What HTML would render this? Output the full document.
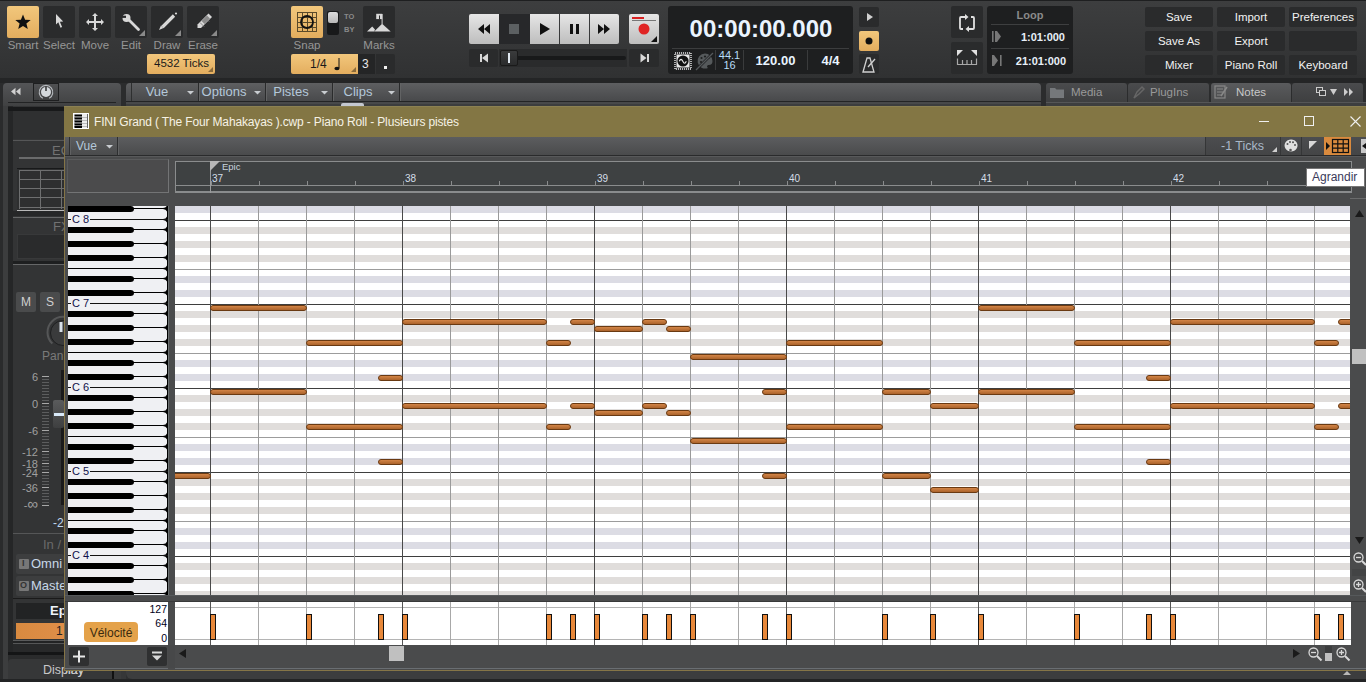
<!DOCTYPE html><html><head><meta charset="utf-8"><style>
html,body{margin:0;padding:0;}
body{width:1366px;height:682px;overflow:hidden;position:relative;background:#2b2c2d;font-family:"Liberation Sans",sans-serif;}
div{box-sizing:border-box;}
svg{position:absolute;overflow:visible;}
</style></head><body>
<div style="position:absolute;left:0px;top:0px;width:1366px;height:79px;background:linear-gradient(#3d3e3f,#303132);"></div>
<div style="position:absolute;left:0px;top:0px;width:1366px;height:1px;background:#1e1f20;"></div>
<div style="position:absolute;left:0px;top:78px;width:1366px;height:5px;background:#242526;"></div>
<div style="position:absolute;left:7px;top:6px;width:32px;height:32px;background:linear-gradient(#f2c77c,#e3ad5e);border-radius:2px;"></div>
<div style="position:absolute;left:1px;top:39px;width:44px;text-align:center;white-space:nowrap;font-size:11.5px;color:#969696;">Smart</div>
<div style="position:absolute;left:43px;top:6px;width:32px;height:32px;background:#2a2b2c;border-radius:2px;"></div>
<div style="position:absolute;left:37px;top:39px;width:44px;text-align:center;white-space:nowrap;font-size:11.5px;color:#969696;">Select</div>
<div style="position:absolute;left:79px;top:6px;width:32px;height:32px;background:#2a2b2c;border-radius:2px;"></div>
<div style="position:absolute;left:73px;top:39px;width:44px;text-align:center;white-space:nowrap;font-size:11.5px;color:#969696;">Move</div>
<div style="position:absolute;left:115px;top:6px;width:32px;height:32px;background:#2a2b2c;border-radius:2px;"></div>
<div style="position:absolute;left:109px;top:39px;width:44px;text-align:center;white-space:nowrap;font-size:11.5px;color:#969696;">Edit</div>
<svg style="left:139px;top:30px" width="6" height="6"><path d="M6 0V6H0Z" fill="#8a8a8a"/></svg>
<div style="position:absolute;left:151px;top:6px;width:32px;height:32px;background:#2a2b2c;border-radius:2px;"></div>
<div style="position:absolute;left:145px;top:39px;width:44px;text-align:center;white-space:nowrap;font-size:11.5px;color:#969696;">Draw</div>
<svg style="left:175px;top:30px" width="6" height="6"><path d="M6 0V6H0Z" fill="#8a8a8a"/></svg>
<div style="position:absolute;left:187px;top:6px;width:32px;height:32px;background:#2a2b2c;border-radius:2px;"></div>
<div style="position:absolute;left:181px;top:39px;width:44px;text-align:center;white-space:nowrap;font-size:11.5px;color:#969696;">Erase</div>
<svg style="left:211px;top:30px" width="6" height="6"><path d="M6 0V6H0Z" fill="#8a8a8a"/></svg>
<svg style="left:7px;top:6px" width="32" height="32"><path d="M16 8.5l2.1 5.2 5.6.3-4.3 3.6 1.4 5.4L16 20l-4.8 3 1.4-5.4-4.3-3.6 5.6-.3z" fill="#111"/></svg>
<svg style="left:43px;top:6px" width="32" height="32"><path d="M13 8v10.5l2.3-2.2 2.2 5.5 1.6-.7-2.2-5.4 3.3-.2z" fill="#d8d8d8"/></svg>
<svg style="left:79px;top:6px" width="32" height="32"><path d="M16 7l3 3h-2v5h5v-2l3 3-3 3v-2h-5v5h2l-3 3-3-3h2v-5h-5v2l-3-3 3-3v2h5v-5h-2z" fill="#d8d8d8"/></svg>
<svg style="left:115px;top:6px" width="32" height="32"><path d="M13 13L23.5 23.5" stroke="#d8d8d8" stroke-width="2.8" stroke-linecap="round"/><circle cx="11.5" cy="12" r="4" fill="#d8d8d8"/><path d="M5.5 10.8H11" stroke="#2a2b2c" stroke-width="2.2"/></svg>
<svg style="left:151px;top:6px" width="32" height="32"><path d="M23 9.5L11.5 21" stroke="#d8d8d8" stroke-width="3.2"/><path d="M10 19.5l2.5 2.5-4.5 2z" fill="#d8d8d8"/><circle cx="25" cy="7.5" r="1.1" fill="#d8d8d8"/></svg>
<svg style="left:187px;top:6px" width="32" height="32"><path d="M21.5 7.5l3.5 3.5-11 11h-3.5v-3.5z" fill="#d8d8d8"/><path d="M13 16.5l4 4M18 11.5l4 4" stroke="#888" stroke-width="1"/><path d="M14.5 15l5.5-5.5 3 3-5.5 5.5z" fill="#8a8a8a"/></svg>
<div style="position:absolute;left:147px;top:54px;width:68px;height:20px;background:linear-gradient(#f2c77c,#e3ad5e);border-radius:2px;"></div>
<div style="position:absolute;left:154px;top:57px;white-space:nowrap;font-size:11.5px;color:#1a1a1a;">4532 Ticks</div>
<svg style="left:208px;top:67px" width="5" height="5"><path d="M5 0V5H0Z" fill="#8a6a3a"/></svg>
<div style="position:absolute;left:291px;top:6px;width:32px;height:32px;background:linear-gradient(#f2c77c,#e3ad5e);border-radius:2px;"></div>
<svg style="left:291px;top:6px" width="32" height="32"><g stroke="#5a4a2a" stroke-width="1" fill="none"><rect x="6.5" y="6.5" width="19" height="19"/><path d="M11.5 6.5v19M16.5 6.5v19M21.5 6.5v19M6.5 11.5h19M6.5 16.5h19M6.5 21.5h19"/></g><circle cx="16" cy="16" r="6" stroke="#111" stroke-width="1.8" fill="none"/></svg>
<div style="position:absolute;left:327px;top:11px;width:12px;height:24px;background:#18191a;border-radius:2px;"></div>
<div style="position:absolute;left:328px;top:12px;width:10px;height:11px;background:linear-gradient(#dcdcdc,#b8b8b8);border-radius:2px;"></div>
<div style="position:absolute;left:344px;top:12px;white-space:nowrap;font-size:7.5px;font-weight:bold;color:#8a8a8a;">TO</div>
<div style="position:absolute;left:344px;top:25px;white-space:nowrap;font-size:7.5px;font-weight:bold;color:#8a8a8a;">BY</div>
<div style="position:absolute;left:363px;top:6px;width:32px;height:32px;background:#2a2b2c;border-radius:2px;"></div>
<svg style="left:363px;top:6px" width="32" height="32"><path d="M4 25.6L9.2 20.4 12 23.6 11.2 25.6z" fill="#d8d8d8"/><path d="M11.2 25.6L19.1 17.7 27.7 25.6z" fill="#d8d8d8"/><path d="M19.1 18V8" stroke="#d8d8d8" stroke-width="1"/><path d="M13.2 7.8h6v5.3h-6z" fill="#d8d8d8"/><rect x="16" y="9.5" width="1" height="3.6" fill="#2a2b2c"/></svg>
<div style="position:absolute;left:285px;top:39px;width:44px;text-align:center;white-space:nowrap;font-size:11.5px;color:#969696;">Snap</div>
<div style="position:absolute;left:357px;top:39px;width:44px;text-align:center;white-space:nowrap;font-size:11.5px;color:#969696;">Marks</div>
<div style="position:absolute;left:291px;top:54px;width:67px;height:20px;background:linear-gradient(#f2c77c,#e3ad5e);border-radius:2px 0 0 2px;"></div>
<div style="position:absolute;left:310px;top:57px;white-space:nowrap;font-size:12px;color:#1a1a1a;">1/4</div>
<svg style="left:333px;top:58px" width="8" height="13"><path d="M6 0v10" stroke="#111" stroke-width="1"/><ellipse cx="4" cy="10.5" rx="2.6" ry="1.8" fill="#111"/></svg>
<svg style="left:351px;top:67px" width="5" height="5"><path d="M5 0V5H0Z" fill="#8a6a3a"/></svg>
<div style="position:absolute;left:358px;top:54px;width:17px;height:20px;background:#242526;"></div>
<div style="position:absolute;left:362px;top:57px;white-space:nowrap;font-size:12px;color:#e8e8e8;">3</div>
<div style="position:absolute;left:376px;top:54px;width:19px;height:20px;background:#2a2b2c;border-radius:0 2px 2px 0;"></div>
<div style="position:absolute;left:384px;top:66px;width:3px;height:3px;background:#f0f0f0;"></div>
<div style="position:absolute;left:469px;top:14px;width:30px;height:30px;background:linear-gradient(#e6e6e6,#bdbdbd);border-radius:2px 0 0 2px;"></div>
<div style="position:absolute;left:499px;top:14px;width:31px;height:30px;background:#27282a;"></div>
<div style="position:absolute;left:530px;top:14px;width:29px;height:30px;background:linear-gradient(#e6e6e6,#bdbdbd);"></div>
<div style="position:absolute;left:560px;top:14px;width:29px;height:30px;background:linear-gradient(#e6e6e6,#bdbdbd);"></div>
<div style="position:absolute;left:590px;top:14px;width:29px;height:30px;background:linear-gradient(#e6e6e6,#bdbdbd);border-radius:0 2px 2px 0;"></div>
<svg style="left:469px;top:14px" width="30" height="30"><path d="M9 15l6-5v10zM15 15l6-5v10z" fill="#111"/></svg>
<div style="position:absolute;left:509px;top:24px;width:10px;height:10px;background:#5c6062;"></div>
<svg style="left:530px;top:14px" width="29" height="30"><path d="M10 9l10 6-10 6z" fill="#111"/></svg>
<div style="position:absolute;left:570px;top:24px;width:3px;height:10px;background:#111;"></div>
<div style="position:absolute;left:576px;top:24px;width:3px;height:10px;background:#111;"></div>
<svg style="left:590px;top:14px" width="29" height="30"><path d="M8 10l6 5-6 5zM14 10l6 5-6 5z" fill="#111"/></svg>
<div style="position:absolute;left:629px;top:14px;width:30px;height:30px;background:linear-gradient(#e6e6e6,#bdbdbd);border-radius:2px;"></div>
<div style="position:absolute;left:632px;top:17px;width:12px;height:2px;background:#d82020;"></div>
<div style="position:absolute;left:632px;top:20px;width:24px;height:1px;background:#777;"></div>
<svg style="left:629px;top:14px" width="30" height="30"><circle cx="15" cy="15" r="5.5" fill="#e02424"/><path d="M28 22v6h-6z" fill="#111"/></svg>
<div style="position:absolute;left:469px;top:49px;width:29px;height:18px;background:#2a2b2c;border-radius:2px;"></div>
<div style="position:absolute;left:499px;top:49px;width:128px;height:18px;background:#2a2b2c;"></div>
<div style="position:absolute;left:629px;top:49px;width:30px;height:18px;background:#2a2b2c;border-radius:2px;"></div>
<svg style="left:469px;top:49px" width="29" height="18"><path d="M11 5h2v8h-2z" fill="#d8d8d8"/><path d="M13 9l6-4.5v9z" fill="#d8d8d8"/></svg>
<svg style="left:629px;top:49px" width="30" height="18"><path d="M18 5h2v8h-2z" fill="#d8d8d8"/><path d="M17.5 9l-6-4.5v9z" fill="#d8d8d8"/></svg>
<div style="position:absolute;left:516px;top:56px;width:110px;height:4px;background:#18191a;border-radius:2px;"></div>
<div style="position:absolute;left:500px;top:50px;width:18px;height:16px;background:linear-gradient(#3a3b3c,#2a2b2c);border:1px solid #1a1a1a;border-radius:2px;"></div>
<div style="position:absolute;left:508px;top:53px;width:2px;height:10px;background:#e0e8f0;"></div>
<div style="position:absolute;left:668px;top:6px;width:185px;height:68px;background:#1e1f20;border-radius:3px;"></div>
<div style="position:absolute;left:668px;top:15px;width:186px;text-align:center;white-space:nowrap;font-size:24px;font-weight:bold;color:#eaf4ff;">00:00:00.000</div>
<div style="position:absolute;left:672px;top:48px;width:177px;height:1px;background:#3c3d3e;"></div>
<div style="position:absolute;left:715px;top:50px;width:1px;height:20px;background:#3a3b3c;"></div>
<div style="position:absolute;left:743px;top:50px;width:1px;height:20px;background:#3a3b3c;"></div>
<div style="position:absolute;left:807px;top:50px;width:1px;height:20px;background:#3a3b3c;"></div>
<svg style="left:674px;top:52px" width="18" height="18"><rect x="1" y="1" width="16" height="16" fill="none" stroke="#e8e8e8" stroke-width="1.4" stroke-dasharray="1.1 0.9"/><rect x="2.5" y="2.5" width="13" height="13" fill="#e8e8e8"/><circle cx="9" cy="9" r="5.6" fill="#111"/><path d="M5.3 9.3c1.1-2.6 2.3-2.6 3.5 0s2.4 2.6 3.5 0" stroke="#e8e8e8" fill="none" stroke-width="1.1"/></svg>
<svg style="left:695px;top:51px" width="20" height="20"><path d="M10 2.5a7.5 7.5 0 1 0 3 14.4c-1.6-1-1-3 0.8-3 2.5 0 3.7-1.6 3.7-4A7.5 7.5 0 0 0 10 2.5z" fill="#55595b"/><circle cx="6.5" cy="7" r="1.1" fill="#1e1f20"/><circle cx="10" cy="5.5" r="1.1" fill="#1e1f20"/><circle cx="13.5" cy="7" r="1.1" fill="#1e1f20"/><circle cx="6" cy="11" r="1.1" fill="#1e1f20"/><path d="M1 19L18 2" stroke="#1e1f20" stroke-width="2.5"/><path d="M1 19L18 2" stroke="#55595b" stroke-width="1.3"/></svg>
<div style="position:absolute;left:716px;top:50px;width:27px;text-align:center;white-space:nowrap;font-size:11px;color:#b8dcf8;line-height:10px;">44.1</div>
<div style="position:absolute;left:716px;top:60px;width:27px;text-align:center;white-space:nowrap;font-size:11px;color:#b8dcf8;line-height:10px;">16</div>
<div style="position:absolute;left:744px;top:53px;width:63px;text-align:center;white-space:nowrap;font-size:13px;font-weight:bold;color:#eaf4ff;">120.00</div>
<div style="position:absolute;left:808px;top:53px;width:45px;text-align:center;white-space:nowrap;font-size:13px;font-weight:bold;color:#eaf4ff;">4/4</div>
<div style="position:absolute;left:859px;top:7px;width:20px;height:20px;background:#2a2b2c;border-radius:2px;"></div>
<svg style="left:859px;top:7px" width="20" height="20"><path d="M8 6l6 4-6 4z" fill="#d0d0d0"/></svg>
<div style="position:absolute;left:859px;top:31px;width:20px;height:20px;background:linear-gradient(#f2c77c,#e3ad5e);border-radius:2px;"></div>
<svg style="left:859px;top:31px" width="20" height="20"><circle cx="10" cy="10" r="3.5" fill="#111"/></svg>
<div style="position:absolute;left:859px;top:54px;width:20px;height:20px;background:#2a2b2c;border-radius:2px;"></div>
<svg style="left:859px;top:54px" width="20" height="20"><path d="M4 18l4-14h3l4 14z" fill="none" stroke="#d0d0d0" stroke-width="1.3"/><path d="M9 13l7-8" stroke="#d0d0d0" stroke-width="1.3"/></svg>
<div style="position:absolute;left:951px;top:6px;width:32px;height:32px;background:#2a2b2c;border-radius:2px;"></div>
<svg style="left:951px;top:6px" width="32" height="32"><path d="M12 23h-2a1 1 0 0 1-1-1v-10a1 1 0 0 1 1-1h4" stroke="#e0e0e0" stroke-width="1.8" fill="none"/><path d="M14 8v6l3.5-3z" fill="#e0e0e0"/><path d="M20 11h2a1 1 0 0 1 1 1v10a1 1 0 0 1-1 1h-4" stroke="#e0e0e0" stroke-width="1.8" fill="none"/><path d="M18 20v6l-3.5-3z" fill="#e0e0e0"/></svg>
<div style="position:absolute;left:951px;top:42px;width:32px;height:32px;background:#2a2b2c;border-radius:2px;"></div>
<svg style="left:951px;top:42px" width="32" height="32"><path d="M6 8h6l-6 6z M26 8h-6l6 6z" fill="#e0e0e0"/><path d="M6.5 16.5v6h19v-6M11.5 18v4M16 18v4M20.5 18v4" stroke="#a8a8a8" stroke-width="1.2" fill="none"/></svg>
<div style="position:absolute;left:987px;top:6px;width:86px;height:68px;background:#1e1f20;border-radius:3px;"></div>
<div style="position:absolute;left:987px;top:9px;width:86px;text-align:center;white-space:nowrap;font-size:11px;font-weight:bold;color:#8a8a8a;">Loop</div>
<div style="position:absolute;left:991px;top:24px;width:78px;height:1px;background:#3e3f40;"></div>
<div style="position:absolute;left:991px;top:48px;width:78px;height:1px;background:#3e3f40;"></div>
<svg style="left:991px;top:30px" width="12" height="14"><rect x="1" y="1" width="1.6" height="11" fill="#777"/><path d="M4 1h2l4 5.5-4 5.5h-2z" fill="#777"/></svg>
<svg style="left:991px;top:54px" width="12" height="14"><rect x="9" y="1" width="1.6" height="11" fill="#777"/><path d="M1 1h2l4 5.5-4 5.5h-2z" fill="#777"/></svg>
<div style="position:absolute;left:990px;top:31px;width:75px;text-align:right;font-size:11px;font-weight:bold;color:#e8f0f8;">1:01:000</div>
<div style="position:absolute;left:990px;top:55px;width:76px;text-align:right;font-size:11px;font-weight:bold;color:#e8f0f8;">21:01:000</div>
<div style="position:absolute;left:1145px;top:7px;width:68px;height:20px;background:#2a2b2c;border-radius:2px;"></div>
<div style="position:absolute;left:1145px;top:11px;width:68px;text-align:center;white-space:nowrap;font-size:11.5px;color:#f2f2f2;">Save</div>
<div style="position:absolute;left:1217px;top:7px;width:68px;height:20px;background:#2a2b2c;border-radius:2px;"></div>
<div style="position:absolute;left:1217px;top:11px;width:68px;text-align:center;white-space:nowrap;font-size:11.5px;color:#f2f2f2;">Import</div>
<div style="position:absolute;left:1289px;top:7px;width:68px;height:20px;background:#2a2b2c;border-radius:2px;"></div>
<div style="position:absolute;left:1289px;top:11px;width:68px;text-align:center;white-space:nowrap;font-size:11.5px;color:#f2f2f2;">Preferences</div>
<div style="position:absolute;left:1145px;top:31px;width:68px;height:20px;background:#2a2b2c;border-radius:2px;"></div>
<div style="position:absolute;left:1145px;top:35px;width:68px;text-align:center;white-space:nowrap;font-size:11.5px;color:#f2f2f2;">Save As</div>
<div style="position:absolute;left:1217px;top:31px;width:68px;height:20px;background:#2a2b2c;border-radius:2px;"></div>
<div style="position:absolute;left:1217px;top:35px;width:68px;text-align:center;white-space:nowrap;font-size:11.5px;color:#f2f2f2;">Export</div>
<div style="position:absolute;left:1289px;top:31px;width:68px;height:20px;background:#2a2b2c;border-radius:2px;"></div>
<div style="position:absolute;left:1145px;top:55px;width:68px;height:20px;background:#2a2b2c;border-radius:2px;"></div>
<div style="position:absolute;left:1145px;top:59px;width:68px;text-align:center;white-space:nowrap;font-size:11.5px;color:#f2f2f2;">Mixer</div>
<div style="position:absolute;left:1217px;top:55px;width:68px;height:20px;background:#2a2b2c;border-radius:2px;"></div>
<div style="position:absolute;left:1217px;top:59px;width:68px;text-align:center;white-space:nowrap;font-size:11.5px;color:#f2f2f2;">Piano Roll</div>
<div style="position:absolute;left:1289px;top:55px;width:68px;height:20px;background:#2a2b2c;border-radius:2px;"></div>
<div style="position:absolute;left:1289px;top:59px;width:68px;text-align:center;white-space:nowrap;font-size:11.5px;color:#f2f2f2;">Keyboard</div>
<div style="position:absolute;left:3px;top:83px;width:118px;height:23px;background:linear-gradient(#545557,#404142);border-radius:4px 4px 0 0;"></div>
<svg style="left:10px;top:87px" width="12" height="9"><path d="M1 4.5l4.5-3.8v7.6zM6 4.5l4.5-3.8v7.6z" fill="#d0d0d0"/></svg>
<div style="position:absolute;left:33px;top:83px;width:26px;height:18px;background:linear-gradient(#505153,#3e3f40);border:1px solid #1e1f20;"></div>
<svg style="left:33px;top:83px" width="26" height="18"><path d="M9.8 15.2A6.8 6.8 0 1 1 16.2 15.2" stroke="#b8bcc0" stroke-width="1.1" fill="none"/><circle cx="13" cy="9" r="5" fill="#d4d8dc"/><rect x="12.2" y="3.5" width="1.6" height="4.5" fill="#3a3b3c"/></svg>
<div style="position:absolute;left:8px;top:102px;width:108px;height:1px;background:#222324;"></div>
<div style="position:absolute;left:126px;top:83px;width:915px;height:19px;background:linear-gradient(#5e5f61,#47484a);border-radius:4px 4px 0 0;"></div>
<div style="position:absolute;left:131px;top:83px;width:1px;height:19px;background:#2e2f30;"></div>
<div style="position:absolute;left:198px;top:83px;width:1px;height:19px;background:#2a2b2c;"></div>
<div style="position:absolute;left:199px;top:83px;width:1px;height:19px;background:#626364;"></div>
<div style="position:absolute;left:132px;top:84px;width:50px;text-align:center;white-space:nowrap;font-size:13px;color:#b4c8da;">Vue</div>
<svg style="left:187px;top:91px" width="7" height="4"><path d="M0 0h7l-3.5 3.5z" fill="#c8ccd0"/></svg>
<div style="position:absolute;left:265px;top:83px;width:1px;height:19px;background:#2a2b2c;"></div>
<div style="position:absolute;left:266px;top:83px;width:1px;height:19px;background:#626364;"></div>
<div style="position:absolute;left:199px;top:84px;width:50px;text-align:center;white-space:nowrap;font-size:13px;color:#b4c8da;">Options</div>
<svg style="left:254px;top:91px" width="7" height="4"><path d="M0 0h7l-3.5 3.5z" fill="#c8ccd0"/></svg>
<div style="position:absolute;left:332px;top:83px;width:1px;height:19px;background:#2a2b2c;"></div>
<div style="position:absolute;left:333px;top:83px;width:1px;height:19px;background:#626364;"></div>
<div style="position:absolute;left:266px;top:84px;width:50px;text-align:center;white-space:nowrap;font-size:13px;color:#b4c8da;">Pistes</div>
<svg style="left:321px;top:91px" width="7" height="4"><path d="M0 0h7l-3.5 3.5z" fill="#c8ccd0"/></svg>
<div style="position:absolute;left:399px;top:83px;width:1px;height:19px;background:#2a2b2c;"></div>
<div style="position:absolute;left:400px;top:83px;width:1px;height:19px;background:#626364;"></div>
<div style="position:absolute;left:333px;top:84px;width:50px;text-align:center;white-space:nowrap;font-size:13px;color:#b4c8da;">Clips</div>
<svg style="left:388px;top:91px" width="7" height="4"><path d="M0 0h7l-3.5 3.5z" fill="#c8ccd0"/></svg>
<div style="position:absolute;left:126px;top:101px;width:915px;height:1px;background:#232425;"></div>
<div style="position:absolute;left:126px;top:102px;width:915px;height:2px;background:#48494a;"></div>
<div style="position:absolute;left:126px;top:104px;width:915px;height:2px;background:#3c3d3e;"></div>
<div style="position:absolute;left:341px;top:103px;width:23px;height:3px;background:#c4c8d0;border-radius:2px 2px 0 0;"></div>
<div style="position:absolute;left:1041px;top:83px;width:5px;height:19px;background:#2b2c2d;"></div>
<div style="position:absolute;left:1046px;top:83px;width:81px;height:19px;background:linear-gradient(#4a4b4d,#3e3f40);border-radius:3px 3px 0 0;"></div>
<div style="position:absolute;left:1128px;top:83px;width:81px;height:19px;background:linear-gradient(#4a4b4d,#3e3f40);border-radius:3px 3px 0 0;"></div>
<div style="position:absolute;left:1211px;top:83px;width:80px;height:19px;background:linear-gradient(#5a5b5d,#4a4b4c);border-radius:3px 3px 0 0;"></div>
<div style="position:absolute;left:1292px;top:83px;width:71px;height:19px;background:linear-gradient(#4a4b4d,#3e3f40);border-radius:3px 3px 0 0;"></div>
<div style="position:absolute;left:1046px;top:102px;width:320px;height:1px;background:#555657;"></div>
<div style="position:absolute;left:1046px;top:103px;width:320px;height:3px;background:#3d3e3f;"></div>
<div style="position:absolute;left:1071px;top:86px;white-space:nowrap;font-size:11.5px;color:#9a9a9a;">Media</div>
<div style="position:absolute;left:1150px;top:86px;white-space:nowrap;font-size:11.5px;color:#9a9a9a;">PlugIns</div>
<div style="position:absolute;left:1236px;top:86px;white-space:nowrap;font-size:11.5px;color:#c8c8c8;">Notes</div>
<svg style="left:1049px;top:85px" width="16" height="14"><path d="M1 3h5l1.5 1.5h7.5v8.5h-14z" fill="#75787b"/></svg>
<svg style="left:1131px;top:84px" width="16" height="16"><path d="M3 14l3-6 5-5 2 2-5 5z" fill="none" stroke="#666" stroke-width="1.5"/></svg>
<svg style="left:1213px;top:84px" width="16" height="16"><rect x="2" y="2" width="10" height="12" fill="none" stroke="#888" stroke-width="1.2"/><path d="M4 5h6M4 8h6M4 11h4" stroke="#888"/><path d="M14 3l-6 9" stroke="#888" stroke-width="1.6"/></svg>
<svg style="left:1315px;top:86px" width="40" height="12"><rect x="1.5" y="1.5" width="6" height="5" fill="none" stroke="#ccc"/><rect x="4.5" y="4.5" width="6" height="5" fill="#3e3f40" stroke="#ccc"/><path d="M15 3h7l-3.5 6z" fill="#ccc"/><path d="M29 2l4 4-4 4zM34 2l4 4-4 4z" fill="#ccc"/></svg>
<div style="position:absolute;left:0px;top:106px;width:3px;height:576px;background:#2a2b2c;"></div>
<div style="position:absolute;left:3px;top:106px;width:5px;height:576px;background:#3c3d3e;"></div>
<div style="position:absolute;left:8px;top:106px;width:5px;height:549px;background:#252627;"></div>
<div style="position:absolute;left:13px;top:106px;width:51px;height:549px;background:#333435;"></div>
<div style="position:absolute;left:8px;top:107px;width:56px;height:4px;background:#18191a;"></div>
<div style="position:absolute;left:13px;top:111px;width:51px;height:28px;background:#2f3031;"></div>
<div style="position:absolute;left:13px;top:140px;width:51px;height:1px;background:#555657;"></div>
<div style="position:absolute;left:52px;top:143px;white-space:nowrap;font-size:13px;color:#727272;">EQ</div>
<div style="position:absolute;left:19px;top:157px;width:45px;height:2px;background:#6a6b6c;"></div>
<div style="position:absolute;left:17px;top:168px;width:47px;height:42px;background:#2e2f30;border-top:1px solid #18191a;"></div>
<svg style="left:17px;top:168px" width="47" height="44"><g stroke="#6e6f70" stroke-width="1" fill="none"><path d="M2.5 2v39M23.5 2v39M44.5 2v39M2 2.5h45M2 11.5h45M2 20.5h45M2 29.5h45M2 39.5h45"/></g><rect x="0" y="42" width="47" height="1" fill="#b8b8b8"/></svg>
<div style="position:absolute;left:13px;top:211px;width:51px;height:5px;background:#262728;"></div>
<div style="position:absolute;left:13px;top:217px;width:51px;height:1px;background:#666768;"></div>
<div style="position:absolute;left:53px;top:219px;white-space:nowrap;font-size:13px;color:#727272;">FX</div>
<div style="position:absolute;left:17px;top:234px;width:47px;height:25px;background:#2a2b2c;border:1px solid #38393a;border-right:none;"></div>
<div style="position:absolute;left:13px;top:261px;width:51px;height:3px;background:#1e1f20;"></div>
<div style="position:absolute;left:13px;top:264px;width:51px;height:1px;background:#666768;"></div>
<div style="position:absolute;left:16px;top:292px;width:20px;height:20px;background:#4a4b4c;border-radius:2px;"></div>
<div style="position:absolute;left:40px;top:292px;width:20px;height:20px;background:#4a4b4c;border-radius:2px;"></div>
<div style="position:absolute;left:16px;top:295px;width:20px;text-align:center;white-space:nowrap;font-size:12px;color:#d0d0d0;">M</div>
<div style="position:absolute;left:40px;top:295px;width:20px;text-align:center;white-space:nowrap;font-size:12px;color:#d0d0d0;">S</div>
<svg style="left:33px;top:303px" width="60" height="60"><path d="M19.4 40.6A15.5 15.5 0 1 1 40.6 40.6" stroke="#555657" stroke-width="2" fill="none"/><circle cx="30" cy="30" r="12.5" fill="#3a3b3c" stroke="#1e1f20" stroke-width="1"/><rect x="26.5" y="19" width="3" height="10" fill="#d8e0e8"/></svg>
<div style="position:absolute;left:42px;top:349px;white-space:nowrap;font-size:12px;color:#7a7a7a;">Pan</div>
<div style="position:absolute;left:0;top:371px;width:38px;text-align:right;font-size:11px;color:#a0a0a0;">6</div>
<div style="position:absolute;left:0;top:398px;width:38px;text-align:right;font-size:11px;color:#a0a0a0;">0</div>
<div style="position:absolute;left:0;top:425px;width:38px;text-align:right;font-size:11px;color:#a0a0a0;">-6</div>
<div style="position:absolute;left:0;top:446px;width:38px;text-align:right;font-size:11px;color:#a0a0a0;">-12</div>
<div style="position:absolute;left:0;top:458px;width:38px;text-align:right;font-size:11px;color:#a0a0a0;">-18</div>
<div style="position:absolute;left:0;top:467px;width:38px;text-align:right;font-size:11px;color:#a0a0a0;">-24</div>
<div style="position:absolute;left:0;top:482px;width:38px;text-align:right;font-size:11px;color:#a0a0a0;">-36</div>
<div style="position:absolute;left:0;top:498px;width:38px;text-align:right;font-size:11px;color:#a0a0a0;">-<span style="font-size:15px;line-height:11px;">∞</span></div>
<svg style="left:42px;top:376px" width="8" height="140"><rect x="0" y="0" width="7" height="1" fill="#a8a8a8"/><rect x="0" y="3" width="7" height="1" fill="#5c5d5e"/><rect x="0" y="6" width="7" height="1" fill="#5c5d5e"/><rect x="0" y="9" width="7" height="1" fill="#5c5d5e"/><rect x="0" y="12" width="7" height="1" fill="#5c5d5e"/><rect x="0" y="15" width="7" height="1" fill="#5c5d5e"/><rect x="0" y="18" width="7" height="1" fill="#5c5d5e"/><rect x="0" y="21" width="7" height="1" fill="#5c5d5e"/><rect x="0" y="24" width="7" height="1" fill="#5c5d5e"/><rect x="0" y="27" width="7" height="1" fill="#a8a8a8"/><rect x="0" y="30" width="7" height="1" fill="#5c5d5e"/><rect x="0" y="33" width="7" height="1" fill="#5c5d5e"/><rect x="0" y="36" width="7" height="1" fill="#5c5d5e"/><rect x="0" y="39" width="7" height="1" fill="#5c5d5e"/><rect x="0" y="42" width="7" height="1" fill="#5c5d5e"/><rect x="0" y="45" width="7" height="1" fill="#5c5d5e"/><rect x="0" y="48" width="7" height="1" fill="#5c5d5e"/><rect x="0" y="51" width="7" height="1" fill="#5c5d5e"/><rect x="0" y="54" width="7" height="1" fill="#a8a8a8"/><rect x="0" y="57" width="7" height="1" fill="#5c5d5e"/><rect x="0" y="60" width="7" height="1" fill="#5c5d5e"/><rect x="0" y="63" width="7" height="1" fill="#5c5d5e"/><rect x="0" y="66" width="7" height="1" fill="#5c5d5e"/><rect x="0" y="69" width="7" height="1" fill="#5c5d5e"/><rect x="0" y="72" width="7" height="1" fill="#5c5d5e"/><rect x="0" y="75" width="7" height="1" fill="#a8a8a8"/><rect x="0" y="78" width="7" height="1" fill="#5c5d5e"/><rect x="0" y="81" width="7" height="1" fill="#5c5d5e"/><rect x="0" y="84" width="7" height="1" fill="#5c5d5e"/><rect x="0" y="87" width="7" height="1" fill="#a8a8a8"/><rect x="0" y="90" width="7" height="1" fill="#5c5d5e"/><rect x="0" y="93" width="7" height="1" fill="#5c5d5e"/><rect x="0" y="96" width="7" height="1" fill="#a8a8a8"/><rect x="0" y="99" width="7" height="1" fill="#5c5d5e"/><rect x="0" y="102" width="7" height="1" fill="#5c5d5e"/><rect x="0" y="105" width="7" height="1" fill="#5c5d5e"/><rect x="0" y="108" width="7" height="1" fill="#5c5d5e"/><rect x="0" y="111" width="7" height="1" fill="#a8a8a8"/><rect x="0" y="114" width="7" height="1" fill="#5c5d5e"/><rect x="0" y="117" width="7" height="1" fill="#5c5d5e"/><rect x="0" y="120" width="7" height="1" fill="#5c5d5e"/><rect x="0" y="123" width="7" height="1" fill="#5c5d5e"/><rect x="0" y="126" width="7" height="1" fill="#5c5d5e"/><rect x="0" y="129" width="7" height="1" fill="#a8a8a8"/></svg>
<div style="position:absolute;left:61px;top:370px;width:3px;height:135px;background:#1a1a1a;"></div>
<div style="position:absolute;left:53px;top:400px;width:11px;height:28px;background:linear-gradient(#5a5b5c,#3e3f40);border-radius:2px;"></div>
<div style="position:absolute;left:54px;top:413px;width:10px;height:3px;background:#d8e8f8;"></div>
<div style="position:absolute;left:53px;top:516px;white-space:nowrap;font-size:12px;color:#c0d8f0;">-2</div>
<div style="position:absolute;left:13px;top:533px;width:51px;height:1px;background:#555657;"></div>
<div style="position:absolute;left:43px;top:537px;white-space:nowrap;font-size:13px;color:#6a6a6a;">In / O</div>
<div style="position:absolute;left:16px;top:554px;width:48px;height:20px;background:#3d3e3f;border-radius:2px;"></div>
<div style="position:absolute;left:19px;top:559px;width:10px;height:10px;background:#777;border-radius:1px;"></div>
<div style="position:absolute;left:22px;top:558px;white-space:nowrap;font-size:9px;font-weight:bold;color:#333;">I</div>
<div style="position:absolute;left:31px;top:556px;white-space:nowrap;font-size:13px;color:#c8d8e8;">Omni</div>
<div style="position:absolute;left:16px;top:576px;width:48px;height:20px;background:#3d3e3f;border-radius:2px;"></div>
<div style="position:absolute;left:19px;top:581px;width:10px;height:10px;background:#777;border-radius:1px;"></div>
<div style="position:absolute;left:20px;top:580px;white-space:nowrap;font-size:9px;font-weight:bold;color:#333;">O</div>
<div style="position:absolute;left:31px;top:578px;white-space:nowrap;font-size:13px;color:#c8d8e8;">Master</div>
<div style="position:absolute;left:13px;top:598px;width:51px;height:1px;background:#1a1a1a;"></div>
<div style="position:absolute;left:16px;top:603px;width:48px;height:16px;background:#222324;"></div>
<div style="position:absolute;left:50px;top:603px;white-space:nowrap;font-size:13px;font-weight:bold;color:#eef4fa;">Ep</div>
<div style="position:absolute;left:16px;top:623px;width:48px;height:16px;background:linear-gradient(90deg,#d88a40,#e08e48);"></div>
<div style="position:absolute;left:56px;top:624px;white-space:nowrap;font-size:12px;color:#222;">1</div>
<div style="position:absolute;left:13px;top:640px;width:51px;height:1px;background:#5a5b5c;"></div>
<div style="position:absolute;left:13px;top:641px;width:51px;height:2px;background:#222324;"></div>
<div style="position:absolute;left:13px;top:643px;width:51px;height:1px;background:#555657;"></div>
<div style="position:absolute;left:13px;top:644px;width:51px;height:8px;background:#28292a;"></div>
<div style="position:absolute;left:8px;top:652px;width:56px;height:3px;background:#141516;"></div>
<div style="position:absolute;left:8px;top:655px;width:56px;height:4px;background:#2a2b2c;"></div>
<div style="position:absolute;left:8px;top:659px;width:118px;height:20px;background:#363738;border-radius:4px 4px 0 0;"></div>
<div style="position:absolute;left:43px;top:663px;white-space:nowrap;font-size:12.5px;color:#c8c8c8;">Display</div>
<div style="position:absolute;left:0px;top:679px;width:1366px;height:3px;background:#232425;"></div>
<div style="position:absolute;left:126px;top:671px;width:1240px;height:8px;background:#2e2f30;"></div>
<div style="position:absolute;left:126px;top:671px;width:1240px;height:8px;background:#3c3d3e;border-radius:0 0 0 6px;"></div>
<svg style="left:1343px;top:671px" width="8" height="4"><path d="M0 4h8l-4-4z" fill="#b8b8b8"/></svg>
<div style="position:absolute;left:112px;top:671px;width:2px;height:8px;background:#111;"></div>
<div style="position:absolute;left:114px;top:671px;width:7px;height:8px;background:#3a3b3c;"></div>
<div style="position:absolute;left:64px;top:106px;width:1302px;height:565px;background:#4a4b4c;"></div>
<div style="position:absolute;left:64px;top:106px;width:1px;height:565px;background:#857547;"></div>
<div style="position:absolute;left:64px;top:670px;width:1302px;height:1px;background:#857547;"></div>
<div style="position:absolute;left:64px;top:106px;width:1302px;height:31px;background:#837644;"></div>
<div style="position:absolute;left:64px;top:106px;width:1302px;height:1px;background:#8c8152;"></div>
<svg style="left:73px;top:113px" width="16" height="16"><rect x="0" y="0" width="16" height="16" fill="#fff"/><rect x="1" y="1" width="14" height="14" fill="#eee"/><rect x="1" y="4" width="14" height="0.6" fill="#999"/><rect x="1" y="7" width="14" height="0.6" fill="#999"/><rect x="1" y="10" width="14" height="0.6" fill="#999"/><rect x="1" y="13" width="14" height="0.6" fill="#999"/><rect x="1.5" y="1.5" width="7.5" height="2" fill="#000"/><rect x="1.5" y="4.5" width="7.5" height="2" fill="#000"/><rect x="1.5" y="7.5" width="7.5" height="2" fill="#000"/><rect x="1.5" y="10.5" width="7.5" height="2" fill="#000"/><rect x="1.5" y="13" width="7.5" height="2" fill="#000"/><rect x="14" y="1" width="1" height="14" fill="#666"/></svg>
<div style="position:absolute;left:94px;top:115px;white-space:nowrap;font-size:12px;letter-spacing:-0.15px;color:#f6f2e4;">FINI Grand ( The Four Mahakayas ).cwp - Piano Roll - Plusieurs pistes</div>
<div style="position:absolute;left:1259px;top:121px;width:10px;height:1px;background:#f0f0f0;"></div>
<div style="position:absolute;left:1304px;top:116px;width:10px;height:10px;border:1px solid #f0f0f0;"></div>
<svg style="left:1350px;top:116px" width="11" height="11"><path d="M0.5 0.5L10.5 10.5M10.5 0.5L0.5 10.5" stroke="#f0f0f0" stroke-width="1.1"/></svg>
<div style="position:absolute;left:65px;top:137px;width:1301px;height:18px;background:linear-gradient(#5c5d5f,#4a4b4c);"></div>
<div style="position:absolute;left:65px;top:155px;width:1301px;height:1px;background:#2a2b2c;"></div>
<div style="position:absolute;left:65px;top:156px;width:1301px;height:1px;background:#58595a;"></div>
<div style="position:absolute;left:69px;top:137px;width:1px;height:18px;background:#2e2f30;"></div>
<div style="position:absolute;left:70px;top:137px;width:1px;height:18px;background:#606162;"></div>
<div style="position:absolute;left:117px;top:137px;width:1px;height:18px;background:#2e2f30;"></div>
<div style="position:absolute;left:118px;top:137px;width:1px;height:18px;background:#606162;"></div>
<div style="position:absolute;left:76px;top:139px;white-space:nowrap;font-size:12px;color:#b4c8da;">Vue</div>
<svg style="left:106px;top:145px" width="7" height="4"><path d="M0 0h7l-3.5 3.5z" fill="#c8ccd0"/></svg>
<div style="position:absolute;left:1206px;top:137px;width:160px;height:18px;background:linear-gradient(#4c4d4f,#444546);"></div>
<div style="position:absolute;left:1205px;top:137px;width:1px;height:18px;background:#353637;"></div>
<div style="position:absolute;left:1280px;top:137px;width:1px;height:18px;background:#353637;"></div>
<div style="position:absolute;left:1301px;top:137px;width:1px;height:18px;background:#353637;"></div>
<div style="position:absolute;left:1221px;top:139px;white-space:nowrap;font-size:12.5px;color:#aab8c8;">-1 Ticks</div>
<svg style="left:1272px;top:147px" width="5" height="5"><path d="M5 0V5H0Z" fill="#d0d0d0"/></svg>
<svg style="left:1284px;top:139px" width="14" height="13"><path d="M7 0.5a6.5 6 0 1 0 0.1 0z" fill="#e0e0e0"/><circle cx="3.5" cy="5" r="1" fill="#555"/><circle cx="6" cy="3" r="1" fill="#555"/><circle cx="9" cy="3.2" r="1" fill="#555"/><circle cx="11" cy="6" r="1" fill="#555"/><circle cx="6.5" cy="11" r="1.3" fill="#555"/></svg>
<svg style="left:1309px;top:141px" width="8" height="8"><path d="M0 8V0h8z" fill="#d8d8d8"/></svg>
<div style="position:absolute;left:1324px;top:137px;width:27px;height:18px;background:#d98a3e;"></div>
<svg style="left:1324px;top:137px" width="27" height="18"><path d="M2 5l4 4-4 4z" fill="#111"/><g fill="none" stroke="#111" stroke-width="1.2"><rect x="8.5" y="2.5" width="16" height="13"/><path d="M13.8 2.5v13M19.2 2.5v13M8.5 6.8h16M8.5 11.1h16"/></g></svg>
<div style="position:absolute;left:1361px;top:139px;width:5px;height:14px;background:#c8c8c8;"></div>
<svg style="left:1362px;top:143px" width="4" height="6"><path d="M4 0v6L0 3z" fill="#111"/></svg>
<div style="position:absolute;left:67px;top:159px;width:102px;height:34px;background:#4b4b4c;border:1px solid #5a5b5c;border-right-color:#737475;border-bottom-color:#737475;"></div>
<div style="position:absolute;left:175px;top:161px;width:1177px;height:32px;background:#3e4142;border:1px solid #8a8c8d;border-bottom-width:2px;"></div>
<div style="position:absolute;left:176px;top:185px;width:1175px;height:1px;background:#8a8c8d;"></div>
<svg style="left:175px;top:161px" width="1176" height="31"><rect x="36" y="20" width="1" height="4" fill="#8a8c8d"/><rect x="84" y="20" width="1" height="4" fill="#8a8c8d"/><rect x="132" y="20" width="1" height="4" fill="#8a8c8d"/><rect x="180" y="20" width="1" height="4" fill="#8a8c8d"/><rect x="228" y="20" width="1" height="4" fill="#8a8c8d"/><rect x="276" y="20" width="1" height="4" fill="#8a8c8d"/><rect x="324" y="20" width="1" height="4" fill="#8a8c8d"/><rect x="372" y="20" width="1" height="4" fill="#8a8c8d"/><rect x="420" y="20" width="1" height="4" fill="#8a8c8d"/><rect x="468" y="20" width="1" height="4" fill="#8a8c8d"/><rect x="516" y="20" width="1" height="4" fill="#8a8c8d"/><rect x="564" y="20" width="1" height="4" fill="#8a8c8d"/><rect x="612" y="20" width="1" height="4" fill="#8a8c8d"/><rect x="660" y="20" width="1" height="4" fill="#8a8c8d"/><rect x="708" y="20" width="1" height="4" fill="#8a8c8d"/><rect x="756" y="20" width="1" height="4" fill="#8a8c8d"/><rect x="804" y="20" width="1" height="4" fill="#8a8c8d"/><rect x="852" y="20" width="1" height="4" fill="#8a8c8d"/><rect x="900" y="20" width="1" height="4" fill="#8a8c8d"/><rect x="948" y="20" width="1" height="4" fill="#8a8c8d"/><rect x="996" y="20" width="1" height="4" fill="#8a8c8d"/><rect x="1044" y="20" width="1" height="4" fill="#8a8c8d"/><rect x="1092" y="20" width="1" height="4" fill="#8a8c8d"/><rect x="1140" y="20" width="1" height="4" fill="#8a8c8d"/></svg>
<div style="position:absolute;left:210px;top:161px;width:1px;height:32px;background:#9a9c9d;"></div>
<svg style="left:210px;top:161px" width="10" height="10"><path d="M0 0h10l-10 10z" fill="#b8b8b8"/></svg>
<div style="position:absolute;left:222px;top:161px;white-space:nowrap;font-size:9.5px;color:#c8d4de;">Epic</div>
<div style="position:absolute;left:212px;top:173px;white-space:nowrap;font-size:10px;color:#d4dee8;">37</div>
<div style="position:absolute;left:405px;top:173px;white-space:nowrap;font-size:10px;color:#d4dee8;">38</div>
<div style="position:absolute;left:597px;top:173px;white-space:nowrap;font-size:10px;color:#d4dee8;">39</div>
<div style="position:absolute;left:789px;top:173px;white-space:nowrap;font-size:10px;color:#d4dee8;">40</div>
<div style="position:absolute;left:981px;top:173px;white-space:nowrap;font-size:10px;color:#d4dee8;">41</div>
<div style="position:absolute;left:1173px;top:173px;white-space:nowrap;font-size:10px;color:#d4dee8;">42</div>
<div style="position:absolute;left:1306px;top:168px;width:59px;height:19px;background:#fff;border:1px solid #767676;"></div>
<div style="position:absolute;left:1312px;top:170px;white-space:nowrap;font-size:12px;color:#3a3a5a;">Agrandir</div>
<svg style="left:0;top:0;position:absolute" width="0" height="0"><defs><linearGradient id="ng" x1="0" y1="0" x2="0" y2="1"><stop offset="0" stop-color="#d8894a"/><stop offset="1" stop-color="#a65f28"/></linearGradient><clipPath id="gc"><rect x="0" y="0" width="1175" height="389"/></clipPath></defs></svg>
<svg style="left:175px;top:206px" width="1175" height="389" shape-rendering="crispEdges"><rect x="0" y="0" width="1175" height="7" fill="#dcdce4"/><rect x="0" y="7" width="1175" height="7" fill="#ffffff"/><rect x="0" y="14" width="1175" height="7" fill="#ffffff"/><rect x="0" y="14" width="1175" height="1" fill="#3e3e3e"/><rect x="0" y="21" width="1175" height="7" fill="#e0dddb"/><rect x="0" y="28" width="1175" height="7" fill="#ffffff"/><rect x="0" y="35" width="1175" height="7" fill="#e0dddb"/><rect x="0" y="42" width="1175" height="7" fill="#ffffff"/><rect x="0" y="49" width="1175" height="7" fill="#e0dddb"/><rect x="0" y="56" width="1175" height="7" fill="#ffffff"/><rect x="0" y="63" width="1175" height="7" fill="#ffffff"/><rect x="0" y="63" width="1175" height="1" fill="#9c9c9c"/><rect x="0" y="70" width="1175" height="7" fill="#dcdce4"/><rect x="0" y="77" width="1175" height="7" fill="#ffffff"/><rect x="0" y="84" width="1175" height="7" fill="#dcdce4"/><rect x="0" y="91" width="1175" height="7" fill="#ffffff"/><rect x="0" y="98" width="1175" height="7" fill="#ffffff"/><rect x="0" y="98" width="1175" height="1" fill="#3e3e3e"/><rect x="0" y="105" width="1175" height="7" fill="#e0dddb"/><rect x="0" y="112" width="1175" height="7" fill="#ffffff"/><rect x="0" y="119" width="1175" height="7" fill="#e0dddb"/><rect x="0" y="126" width="1175" height="7" fill="#ffffff"/><rect x="0" y="133" width="1175" height="7" fill="#e0dddb"/><rect x="0" y="140" width="1175" height="7" fill="#ffffff"/><rect x="0" y="147" width="1175" height="7" fill="#ffffff"/><rect x="0" y="147" width="1175" height="1" fill="#9c9c9c"/><rect x="0" y="154" width="1175" height="7" fill="#dcdce4"/><rect x="0" y="161" width="1175" height="7" fill="#ffffff"/><rect x="0" y="168" width="1175" height="7" fill="#dcdce4"/><rect x="0" y="175" width="1175" height="7" fill="#ffffff"/><rect x="0" y="182" width="1175" height="7" fill="#ffffff"/><rect x="0" y="182" width="1175" height="1" fill="#3e3e3e"/><rect x="0" y="189" width="1175" height="7" fill="#e0dddb"/><rect x="0" y="196" width="1175" height="7" fill="#ffffff"/><rect x="0" y="203" width="1175" height="7" fill="#e0dddb"/><rect x="0" y="210" width="1175" height="7" fill="#ffffff"/><rect x="0" y="217" width="1175" height="7" fill="#e0dddb"/><rect x="0" y="224" width="1175" height="7" fill="#ffffff"/><rect x="0" y="231" width="1175" height="7" fill="#ffffff"/><rect x="0" y="231" width="1175" height="1" fill="#9c9c9c"/><rect x="0" y="238" width="1175" height="7" fill="#dcdce4"/><rect x="0" y="245" width="1175" height="7" fill="#ffffff"/><rect x="0" y="252" width="1175" height="7" fill="#dcdce4"/><rect x="0" y="259" width="1175" height="7" fill="#ffffff"/><rect x="0" y="266" width="1175" height="7" fill="#ffffff"/><rect x="0" y="266" width="1175" height="1" fill="#3e3e3e"/><rect x="0" y="273" width="1175" height="7" fill="#e0dddb"/><rect x="0" y="280" width="1175" height="7" fill="#ffffff"/><rect x="0" y="287" width="1175" height="7" fill="#e0dddb"/><rect x="0" y="294" width="1175" height="7" fill="#ffffff"/><rect x="0" y="301" width="1175" height="7" fill="#e0dddb"/><rect x="0" y="308" width="1175" height="7" fill="#ffffff"/><rect x="0" y="315" width="1175" height="7" fill="#ffffff"/><rect x="0" y="315" width="1175" height="1" fill="#9c9c9c"/><rect x="0" y="322" width="1175" height="7" fill="#dcdce4"/><rect x="0" y="329" width="1175" height="7" fill="#ffffff"/><rect x="0" y="336" width="1175" height="7" fill="#dcdce4"/><rect x="0" y="343" width="1175" height="7" fill="#ffffff"/><rect x="0" y="350" width="1175" height="7" fill="#ffffff"/><rect x="0" y="350" width="1175" height="1" fill="#3e3e3e"/><rect x="0" y="357" width="1175" height="7" fill="#e0dddb"/><rect x="0" y="364" width="1175" height="7" fill="#ffffff"/><rect x="0" y="371" width="1175" height="7" fill="#e0dddb"/><rect x="0" y="378" width="1175" height="7" fill="#ffffff"/><rect x="0" y="385" width="1175" height="4" fill="#e0dddb"/><rect x="35" y="0" width="1" height="389" fill="#4a4a4a"/><rect x="83" y="0" width="1" height="389" fill="#9a9a9a"/><rect x="131" y="0" width="1" height="389" fill="#9a9a9a"/><rect x="179" y="0" width="1" height="389" fill="#9a9a9a"/><rect x="227" y="0" width="1" height="389" fill="#4a4a4a"/><rect x="275" y="0" width="1" height="389" fill="#9a9a9a"/><rect x="323" y="0" width="1" height="389" fill="#9a9a9a"/><rect x="371" y="0" width="1" height="389" fill="#9a9a9a"/><rect x="419" y="0" width="1" height="389" fill="#4a4a4a"/><rect x="467" y="0" width="1" height="389" fill="#9a9a9a"/><rect x="515" y="0" width="1" height="389" fill="#9a9a9a"/><rect x="563" y="0" width="1" height="389" fill="#9a9a9a"/><rect x="611" y="0" width="1" height="389" fill="#4a4a4a"/><rect x="659" y="0" width="1" height="389" fill="#9a9a9a"/><rect x="707" y="0" width="1" height="389" fill="#9a9a9a"/><rect x="755" y="0" width="1" height="389" fill="#9a9a9a"/><rect x="803" y="0" width="1" height="389" fill="#4a4a4a"/><rect x="851" y="0" width="1" height="389" fill="#9a9a9a"/><rect x="899" y="0" width="1" height="389" fill="#9a9a9a"/><rect x="947" y="0" width="1" height="389" fill="#9a9a9a"/><rect x="995" y="0" width="1" height="389" fill="#4a4a4a"/><rect x="1043" y="0" width="1" height="389" fill="#9a9a9a"/><rect x="1091" y="0" width="1" height="389" fill="#9a9a9a"/><rect x="1139" y="0" width="1" height="389" fill="#9a9a9a"/></svg>
<svg style="left:175px;top:206px" width="1175" height="389"><g clip-path="url(#gc)"><rect x="35.5" y="99.5" width="96" height="5" rx="2.5" fill="url(#ng)" stroke="#6a3a12" stroke-width="1"/><rect x="803.5" y="99.5" width="96" height="5" rx="2.5" fill="url(#ng)" stroke="#6a3a12" stroke-width="1"/><rect x="227.5" y="113.5" width="144" height="5" rx="2.5" fill="url(#ng)" stroke="#6a3a12" stroke-width="1"/><rect x="395.5" y="113.5" width="24" height="5" rx="2.5" fill="url(#ng)" stroke="#6a3a12" stroke-width="1"/><rect x="467.5" y="113.5" width="24" height="5" rx="2.5" fill="url(#ng)" stroke="#6a3a12" stroke-width="1"/><rect x="995.5" y="113.5" width="144" height="5" rx="2.5" fill="url(#ng)" stroke="#6a3a12" stroke-width="1"/><rect x="1163.5" y="113.5" width="24" height="5" rx="2.5" fill="url(#ng)" stroke="#6a3a12" stroke-width="1"/><rect x="419.5" y="120.5" width="48" height="5" rx="2.5" fill="url(#ng)" stroke="#6a3a12" stroke-width="1"/><rect x="491.5" y="120.5" width="24" height="5" rx="2.5" fill="url(#ng)" stroke="#6a3a12" stroke-width="1"/><rect x="131.5" y="134.5" width="96" height="5" rx="2.5" fill="url(#ng)" stroke="#6a3a12" stroke-width="1"/><rect x="371.5" y="134.5" width="24" height="5" rx="2.5" fill="url(#ng)" stroke="#6a3a12" stroke-width="1"/><rect x="611.5" y="134.5" width="96" height="5" rx="2.5" fill="url(#ng)" stroke="#6a3a12" stroke-width="1"/><rect x="899.5" y="134.5" width="96" height="5" rx="2.5" fill="url(#ng)" stroke="#6a3a12" stroke-width="1"/><rect x="1139.5" y="134.5" width="24" height="5" rx="2.5" fill="url(#ng)" stroke="#6a3a12" stroke-width="1"/><rect x="515.5" y="148.5" width="96" height="5" rx="2.5" fill="url(#ng)" stroke="#6a3a12" stroke-width="1"/><rect x="203.5" y="169.5" width="24" height="5" rx="2.5" fill="url(#ng)" stroke="#6a3a12" stroke-width="1"/><rect x="971.5" y="169.5" width="24" height="5" rx="2.5" fill="url(#ng)" stroke="#6a3a12" stroke-width="1"/><rect x="35.5" y="183.5" width="96" height="5" rx="2.5" fill="url(#ng)" stroke="#6a3a12" stroke-width="1"/><rect x="587.5" y="183.5" width="24" height="5" rx="2.5" fill="url(#ng)" stroke="#6a3a12" stroke-width="1"/><rect x="707.5" y="183.5" width="48" height="5" rx="2.5" fill="url(#ng)" stroke="#6a3a12" stroke-width="1"/><rect x="803.5" y="183.5" width="96" height="5" rx="2.5" fill="url(#ng)" stroke="#6a3a12" stroke-width="1"/><rect x="227.5" y="197.5" width="144" height="5" rx="2.5" fill="url(#ng)" stroke="#6a3a12" stroke-width="1"/><rect x="395.5" y="197.5" width="24" height="5" rx="2.5" fill="url(#ng)" stroke="#6a3a12" stroke-width="1"/><rect x="467.5" y="197.5" width="24" height="5" rx="2.5" fill="url(#ng)" stroke="#6a3a12" stroke-width="1"/><rect x="755.5" y="197.5" width="48" height="5" rx="2.5" fill="url(#ng)" stroke="#6a3a12" stroke-width="1"/><rect x="995.5" y="197.5" width="144" height="5" rx="2.5" fill="url(#ng)" stroke="#6a3a12" stroke-width="1"/><rect x="1163.5" y="197.5" width="24" height="5" rx="2.5" fill="url(#ng)" stroke="#6a3a12" stroke-width="1"/><rect x="419.5" y="204.5" width="48" height="5" rx="2.5" fill="url(#ng)" stroke="#6a3a12" stroke-width="1"/><rect x="491.5" y="204.5" width="24" height="5" rx="2.5" fill="url(#ng)" stroke="#6a3a12" stroke-width="1"/><rect x="131.5" y="218.5" width="96" height="5" rx="2.5" fill="url(#ng)" stroke="#6a3a12" stroke-width="1"/><rect x="371.5" y="218.5" width="24" height="5" rx="2.5" fill="url(#ng)" stroke="#6a3a12" stroke-width="1"/><rect x="611.5" y="218.5" width="96" height="5" rx="2.5" fill="url(#ng)" stroke="#6a3a12" stroke-width="1"/><rect x="899.5" y="218.5" width="96" height="5" rx="2.5" fill="url(#ng)" stroke="#6a3a12" stroke-width="1"/><rect x="1139.5" y="218.5" width="24" height="5" rx="2.5" fill="url(#ng)" stroke="#6a3a12" stroke-width="1"/><rect x="515.5" y="232.5" width="96" height="5" rx="2.5" fill="url(#ng)" stroke="#6a3a12" stroke-width="1"/><rect x="203.5" y="253.5" width="24" height="5" rx="2.5" fill="url(#ng)" stroke="#6a3a12" stroke-width="1"/><rect x="971.5" y="253.5" width="24" height="5" rx="2.5" fill="url(#ng)" stroke="#6a3a12" stroke-width="1"/><rect x="-14.5" y="267.5" width="50" height="5" rx="2.5" fill="url(#ng)" stroke="#6a3a12" stroke-width="1"/><rect x="587.5" y="267.5" width="24" height="5" rx="2.5" fill="url(#ng)" stroke="#6a3a12" stroke-width="1"/><rect x="707.5" y="267.5" width="48" height="5" rx="2.5" fill="url(#ng)" stroke="#6a3a12" stroke-width="1"/><rect x="755.5" y="281.5" width="48" height="5" rx="2.5" fill="url(#ng)" stroke="#6a3a12" stroke-width="1"/></g></svg>
<svg style="left:68px;top:206px;overflow:hidden" width="99" height="389"><rect x="0" y="0" width="99" height="389" fill="#eff0f3"/><rect x="0" y="2" width="99" height="1" fill="#000"/><path d="M0 0h62.5a3.5 3 0 0 1 0 6H0z" fill="#000"/><path d="M99 -0.5Q98 2 95 2V3Q98 3 99 5.5z" fill="#000"/><rect x="0" y="13" width="99" height="1" fill="#000"/><path d="M99 10.5Q98 13 95 13V14Q98 14 99 16.5z" fill="#000"/><rect x="0" y="23" width="99" height="1" fill="#000"/><path d="M0 21h62.5a3.5 3 0 0 1 0 6H0z" fill="#000"/><path d="M99 20.5Q98 23 95 23V24Q98 24 99 26.5z" fill="#000"/><rect x="0" y="37" width="99" height="1" fill="#000"/><path d="M0 35h62.5a3.5 3 0 0 1 0 6H0z" fill="#000"/><path d="M99 34.5Q98 37 95 37V38Q98 38 99 40.5z" fill="#000"/><rect x="0" y="51" width="99" height="1" fill="#000"/><path d="M0 49h62.5a3.5 3 0 0 1 0 6H0z" fill="#000"/><path d="M99 48.5Q98 51 95 51V52Q98 52 99 54.5z" fill="#000"/><rect x="0" y="62" width="99" height="1" fill="#000"/><path d="M99 59.5Q98 62 95 62V63Q98 63 99 65.5z" fill="#000"/><rect x="0" y="72" width="99" height="1" fill="#000"/><path d="M0 70h62.5a3.5 3 0 0 1 0 6H0z" fill="#000"/><path d="M99 69.5Q98 72 95 72V73Q98 73 99 75.5z" fill="#000"/><rect x="0" y="86" width="99" height="1" fill="#000"/><path d="M0 84h62.5a3.5 3 0 0 1 0 6H0z" fill="#000"/><path d="M99 83.5Q98 86 95 86V87Q98 87 99 89.5z" fill="#000"/><rect x="0" y="97" width="99" height="1" fill="#000"/><path d="M99 94.5Q98 97 95 97V98Q98 98 99 100.5z" fill="#000"/><rect x="0" y="107" width="99" height="1" fill="#000"/><path d="M0 105h62.5a3.5 3 0 0 1 0 6H0z" fill="#000"/><path d="M99 104.5Q98 107 95 107V108Q98 108 99 110.5z" fill="#000"/><rect x="0" y="121" width="99" height="1" fill="#000"/><path d="M0 119h62.5a3.5 3 0 0 1 0 6H0z" fill="#000"/><path d="M99 118.5Q98 121 95 121V122Q98 122 99 124.5z" fill="#000"/><rect x="0" y="135" width="99" height="1" fill="#000"/><path d="M0 133h62.5a3.5 3 0 0 1 0 6H0z" fill="#000"/><path d="M99 132.5Q98 135 95 135V136Q98 136 99 138.5z" fill="#000"/><rect x="0" y="146" width="99" height="1" fill="#000"/><path d="M99 143.5Q98 146 95 146V147Q98 147 99 149.5z" fill="#000"/><rect x="0" y="156" width="99" height="1" fill="#000"/><path d="M0 154h62.5a3.5 3 0 0 1 0 6H0z" fill="#000"/><path d="M99 153.5Q98 156 95 156V157Q98 157 99 159.5z" fill="#000"/><rect x="0" y="170" width="99" height="1" fill="#000"/><path d="M0 168h62.5a3.5 3 0 0 1 0 6H0z" fill="#000"/><path d="M99 167.5Q98 170 95 170V171Q98 171 99 173.5z" fill="#000"/><rect x="0" y="181" width="99" height="1" fill="#000"/><path d="M99 178.5Q98 181 95 181V182Q98 182 99 184.5z" fill="#000"/><rect x="0" y="191" width="99" height="1" fill="#000"/><path d="M0 189h62.5a3.5 3 0 0 1 0 6H0z" fill="#000"/><path d="M99 188.5Q98 191 95 191V192Q98 192 99 194.5z" fill="#000"/><rect x="0" y="205" width="99" height="1" fill="#000"/><path d="M0 203h62.5a3.5 3 0 0 1 0 6H0z" fill="#000"/><path d="M99 202.5Q98 205 95 205V206Q98 206 99 208.5z" fill="#000"/><rect x="0" y="219" width="99" height="1" fill="#000"/><path d="M0 217h62.5a3.5 3 0 0 1 0 6H0z" fill="#000"/><path d="M99 216.5Q98 219 95 219V220Q98 220 99 222.5z" fill="#000"/><rect x="0" y="230" width="99" height="1" fill="#000"/><path d="M99 227.5Q98 230 95 230V231Q98 231 99 233.5z" fill="#000"/><rect x="0" y="240" width="99" height="1" fill="#000"/><path d="M0 238h62.5a3.5 3 0 0 1 0 6H0z" fill="#000"/><path d="M99 237.5Q98 240 95 240V241Q98 241 99 243.5z" fill="#000"/><rect x="0" y="254" width="99" height="1" fill="#000"/><path d="M0 252h62.5a3.5 3 0 0 1 0 6H0z" fill="#000"/><path d="M99 251.5Q98 254 95 254V255Q98 255 99 257.5z" fill="#000"/><rect x="0" y="265" width="99" height="1" fill="#000"/><path d="M99 262.5Q98 265 95 265V266Q98 266 99 268.5z" fill="#000"/><rect x="0" y="275" width="99" height="1" fill="#000"/><path d="M0 273h62.5a3.5 3 0 0 1 0 6H0z" fill="#000"/><path d="M99 272.5Q98 275 95 275V276Q98 276 99 278.5z" fill="#000"/><rect x="0" y="289" width="99" height="1" fill="#000"/><path d="M0 287h62.5a3.5 3 0 0 1 0 6H0z" fill="#000"/><path d="M99 286.5Q98 289 95 289V290Q98 290 99 292.5z" fill="#000"/><rect x="0" y="303" width="99" height="1" fill="#000"/><path d="M0 301h62.5a3.5 3 0 0 1 0 6H0z" fill="#000"/><path d="M99 300.5Q98 303 95 303V304Q98 304 99 306.5z" fill="#000"/><rect x="0" y="314" width="99" height="1" fill="#000"/><path d="M99 311.5Q98 314 95 314V315Q98 315 99 317.5z" fill="#000"/><rect x="0" y="324" width="99" height="1" fill="#000"/><path d="M0 322h62.5a3.5 3 0 0 1 0 6H0z" fill="#000"/><path d="M99 321.5Q98 324 95 324V325Q98 325 99 327.5z" fill="#000"/><rect x="0" y="338" width="99" height="1" fill="#000"/><path d="M0 336h62.5a3.5 3 0 0 1 0 6H0z" fill="#000"/><path d="M99 335.5Q98 338 95 338V339Q98 339 99 341.5z" fill="#000"/><rect x="0" y="349" width="99" height="1" fill="#000"/><path d="M99 346.5Q98 349 95 349V350Q98 350 99 352.5z" fill="#000"/><rect x="0" y="359" width="99" height="1" fill="#000"/><path d="M0 357h62.5a3.5 3 0 0 1 0 6H0z" fill="#000"/><path d="M99 356.5Q98 359 95 359V360Q98 360 99 362.5z" fill="#000"/><rect x="0" y="373" width="99" height="1" fill="#000"/><path d="M0 371h62.5a3.5 3 0 0 1 0 6H0z" fill="#000"/><path d="M99 370.5Q98 373 95 373V374Q98 374 99 376.5z" fill="#000"/><rect x="0" y="387" width="99" height="1" fill="#000"/><path d="M0 385h62.5a3.5 3 0 0 1 0 6H0z" fill="#000"/><path d="M99 384.5Q98 387 95 387V388Q98 388 99 390.5z" fill="#000"/></svg>
<div style="position:absolute;left:167px;top:206px;width:1px;height:389px;background:#000;"></div>
<div style="position:absolute;left:168px;top:206px;width:1px;height:389px;background:#6a7070;"></div>
<div style="position:absolute;left:68px;top:219px;width:100px;height:1px;background:#111;"></div>
<div style="position:absolute;left:71px;top:212px;white-space:nowrap;font-size:11px;color:#10104a;background:#eff0f3;padding:0 1px;line-height:14px;">C 8</div>
<div style="position:absolute;left:68px;top:303px;width:100px;height:1px;background:#111;"></div>
<div style="position:absolute;left:71px;top:296px;white-space:nowrap;font-size:11px;color:#10104a;background:#eff0f3;padding:0 1px;line-height:14px;">C 7</div>
<div style="position:absolute;left:68px;top:387px;width:100px;height:1px;background:#111;"></div>
<div style="position:absolute;left:71px;top:380px;white-space:nowrap;font-size:11px;color:#10104a;background:#eff0f3;padding:0 1px;line-height:14px;">C 6</div>
<div style="position:absolute;left:68px;top:471px;width:100px;height:1px;background:#111;"></div>
<div style="position:absolute;left:71px;top:464px;white-space:nowrap;font-size:11px;color:#10104a;background:#eff0f3;padding:0 1px;line-height:14px;">C 5</div>
<div style="position:absolute;left:68px;top:555px;width:100px;height:1px;background:#111;"></div>
<div style="position:absolute;left:71px;top:548px;white-space:nowrap;font-size:11px;color:#10104a;background:#eff0f3;padding:0 1px;line-height:14px;">C 4</div>
<div style="position:absolute;left:1350px;top:198px;width:16px;height:1px;background:#6a6b6c;"></div>
<svg style="left:1355px;top:210px" width="9" height="7"><path d="M0 7h9l-4.5-7z" fill="#1a1a1a"/></svg>
<svg style="left:1355px;top:537px" width="9" height="7"><path d="M0 0h9l-4.5 7z" fill="#1a1a1a"/></svg>
<div style="position:absolute;left:1352px;top:349px;width:14px;height:15px;background:#c0c0c0;"></div>
<svg style="left:1353px;top:552px" width="14" height="14"><circle cx="5.5" cy="5.5" r="4.5" fill="none" stroke="#d8d8d8" stroke-width="1.3"/><path d="M3 5.5h5" stroke="#d8d8d8" stroke-width="1.3"/><path d="M9 9l4 4" stroke="#d8d8d8" stroke-width="2"/></svg>
<div style="position:absolute;left:1352px;top:569px;width:14px;height:7px;background:#434445;"></div>
<svg style="left:1353px;top:579px" width="14" height="14"><circle cx="5.5" cy="5.5" r="4.5" fill="none" stroke="#d8d8d8" stroke-width="1.3"/><path d="M3 5.5h5M5.5 3v5" stroke="#d8d8d8" stroke-width="1.3"/><path d="M9 9l4 4" stroke="#d8d8d8" stroke-width="2"/></svg>
<div style="position:absolute;left:65px;top:595px;width:1301px;height:1px;background:#56595b;"></div>
<div style="position:absolute;left:65px;top:601px;width:1301px;height:1px;background:#38393a;"></div>
<div style="position:absolute;left:68px;top:602px;width:100px;height:43px;background:#fff;"></div>
<div style="position:absolute;left:120px;top:603px;width:47px;text-align:right;font-size:10.5px;color:#000018;">127</div>
<div style="position:absolute;left:120px;top:617px;width:47px;text-align:right;font-size:10.5px;color:#000018;">64</div>
<div style="position:absolute;left:120px;top:632px;width:47px;text-align:right;font-size:10.5px;color:#000018;">0</div>
<div style="position:absolute;left:84px;top:622px;width:54px;height:20px;background:#e4a24a;border-radius:4px;"></div>
<div style="position:absolute;left:84px;top:626px;width:54px;text-align:center;white-space:nowrap;font-size:12px;color:#3a2a10;">Vélocité</div>
<svg style="left:175px;top:601px;overflow:hidden" width="1176" height="44"><rect x="0" y="1" width="1176" height="43" fill="#fff"/><rect x="0" y="6" width="1176" height="1" fill="#b4b4b4"/><rect x="0" y="38" width="1176" height="1" fill="#b4b4b4"/><rect x="35" y="1" width="1" height="43" fill="#555"/><rect x="83" y="1" width="1" height="43" fill="#a8a8a8"/><rect x="131" y="1" width="1" height="43" fill="#a8a8a8"/><rect x="179" y="1" width="1" height="43" fill="#a8a8a8"/><rect x="227" y="1" width="1" height="43" fill="#555"/><rect x="275" y="1" width="1" height="43" fill="#a8a8a8"/><rect x="323" y="1" width="1" height="43" fill="#a8a8a8"/><rect x="371" y="1" width="1" height="43" fill="#a8a8a8"/><rect x="419" y="1" width="1" height="43" fill="#555"/><rect x="467" y="1" width="1" height="43" fill="#a8a8a8"/><rect x="515" y="1" width="1" height="43" fill="#a8a8a8"/><rect x="563" y="1" width="1" height="43" fill="#a8a8a8"/><rect x="611" y="1" width="1" height="43" fill="#555"/><rect x="659" y="1" width="1" height="43" fill="#a8a8a8"/><rect x="707" y="1" width="1" height="43" fill="#a8a8a8"/><rect x="755" y="1" width="1" height="43" fill="#a8a8a8"/><rect x="803" y="1" width="1" height="43" fill="#555"/><rect x="851" y="1" width="1" height="43" fill="#a8a8a8"/><rect x="899" y="1" width="1" height="43" fill="#a8a8a8"/><rect x="947" y="1" width="1" height="43" fill="#a8a8a8"/><rect x="995" y="1" width="1" height="43" fill="#555"/><rect x="1043" y="1" width="1" height="43" fill="#a8a8a8"/><rect x="1091" y="1" width="1" height="43" fill="#a8a8a8"/><rect x="1139" y="1" width="1" height="43" fill="#a8a8a8"/><rect x="35.5" y="13.5" width="5" height="25" fill="#e8883a" stroke="#111" stroke-width="1"/><rect x="131.5" y="13.5" width="5" height="25" fill="#e8883a" stroke="#111" stroke-width="1"/><rect x="203.5" y="13.5" width="5" height="25" fill="#e8883a" stroke="#111" stroke-width="1"/><rect x="227.5" y="13.5" width="5" height="25" fill="#e8883a" stroke="#111" stroke-width="1"/><rect x="371.5" y="13.5" width="5" height="25" fill="#e8883a" stroke="#111" stroke-width="1"/><rect x="395.5" y="13.5" width="5" height="25" fill="#e8883a" stroke="#111" stroke-width="1"/><rect x="419.5" y="13.5" width="5" height="25" fill="#e8883a" stroke="#111" stroke-width="1"/><rect x="467.5" y="13.5" width="5" height="25" fill="#e8883a" stroke="#111" stroke-width="1"/><rect x="491.5" y="13.5" width="5" height="25" fill="#e8883a" stroke="#111" stroke-width="1"/><rect x="515.5" y="13.5" width="5" height="25" fill="#e8883a" stroke="#111" stroke-width="1"/><rect x="587.5" y="13.5" width="5" height="25" fill="#e8883a" stroke="#111" stroke-width="1"/><rect x="611.5" y="13.5" width="5" height="25" fill="#e8883a" stroke="#111" stroke-width="1"/><rect x="707.5" y="13.5" width="5" height="25" fill="#e8883a" stroke="#111" stroke-width="1"/><rect x="755.5" y="13.5" width="5" height="25" fill="#e8883a" stroke="#111" stroke-width="1"/><rect x="803.5" y="13.5" width="5" height="25" fill="#e8883a" stroke="#111" stroke-width="1"/><rect x="899.5" y="13.5" width="5" height="25" fill="#e8883a" stroke="#111" stroke-width="1"/><rect x="971.5" y="13.5" width="5" height="25" fill="#e8883a" stroke="#111" stroke-width="1"/><rect x="995.5" y="13.5" width="5" height="25" fill="#e8883a" stroke="#111" stroke-width="1"/><rect x="1139.5" y="13.5" width="5" height="25" fill="#e8883a" stroke="#111" stroke-width="1"/><rect x="1163.5" y="13.5" width="5" height="25" fill="#e8883a" stroke="#111" stroke-width="1"/></svg>
<div style="position:absolute;left:69px;top:647px;width:20px;height:19px;background:#2f3031;border-radius:2px;"></div>
<svg style="left:69px;top:647px" width="20" height="19"><path d="M10 3.5v12M4 9.5h12" stroke="#e8e8e8" stroke-width="2"/></svg>
<div style="position:absolute;left:147px;top:647px;width:20px;height:19px;background:#2f3031;border-radius:2px;"></div>
<svg style="left:147px;top:647px" width="20" height="19"><rect x="5" y="4.5" width="10" height="2" fill="#d8d8d8"/><path d="M5 8.5h10l-5 5z" fill="#d8d8d8"/></svg>
<div style="position:absolute;left:168px;top:645px;width:7px;height:23px;background:#474849;"></div>
<svg style="left:179px;top:649px" width="8" height="9"><path d="M7 0v9L0 4.5z" fill="#1a1a1a"/></svg>
<div style="position:absolute;left:389px;top:646px;width:15px;height:15px;background:#c0c0c0;"></div>
<svg style="left:1293px;top:649px" width="8" height="9"><path d="M0 0v9l7-4.5z" fill="#1a1a1a"/></svg>
<svg style="left:1308px;top:647px" width="15" height="15"><circle cx="5.5" cy="5.5" r="4.5" fill="none" stroke="#d8d8d8" stroke-width="1.3"/><path d="M3 5.5h5" stroke="#d8d8d8" stroke-width="1.3"/><path d="M9 9l4.5 4.5" stroke="#d8d8d8" stroke-width="2"/></svg>
<div style="position:absolute;left:1325px;top:646px;width:7px;height:15px;background:#3c3d3e;"></div>
<div style="position:absolute;left:1325px;top:653px;width:7px;height:8px;background:#c0c0c0;"></div>
<svg style="left:1336px;top:647px" width="15" height="15"><circle cx="5.5" cy="5.5" r="4.5" fill="none" stroke="#d8d8d8" stroke-width="1.3"/><path d="M3 5.5h5M5.5 3v5" stroke="#d8d8d8" stroke-width="1.3"/><path d="M9 9l4.5 4.5" stroke="#d8d8d8" stroke-width="2"/></svg>
<div style="position:absolute;left:65px;top:668px;width:103px;height:1px;background:#6a6e72;"></div>
<div style="position:absolute;left:175px;top:668px;width:1191px;height:1px;background:#6a6e72;"></div>
<div style="position:absolute;left:64px;top:671px;width:48px;height:8px;overflow:hidden;"><div style="position:absolute;left:-21px;top:-8px;white-space:nowrap;font-size:12.5px;color:#c8c8c8;">Display</div></div></body></html>
